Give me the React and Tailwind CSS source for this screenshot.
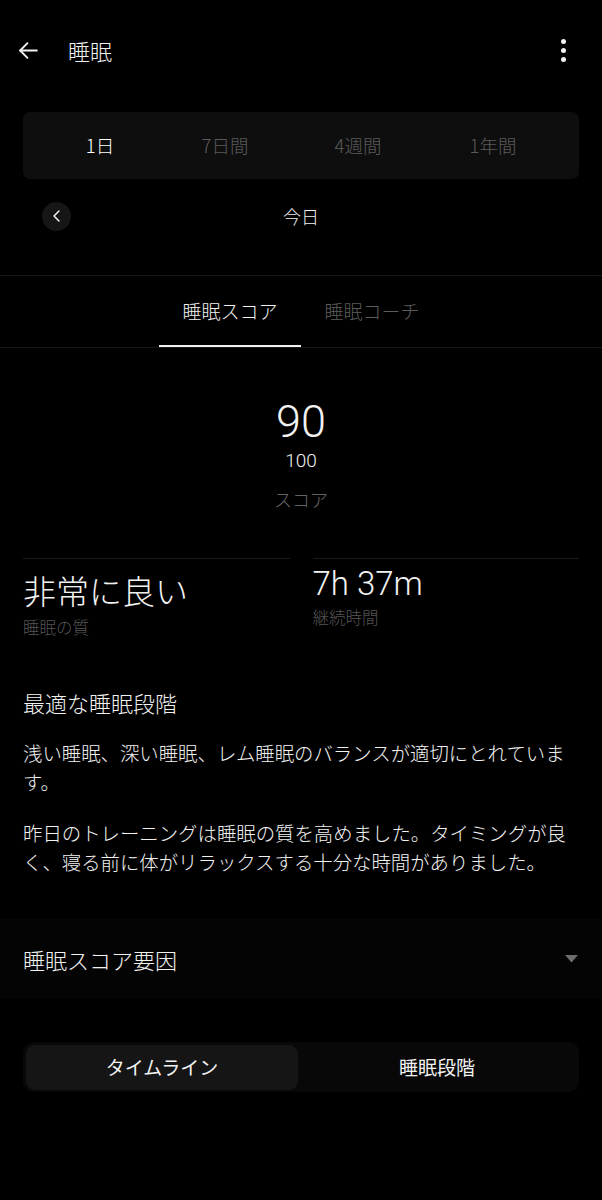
import React from "react";

const font = { fontFamily: '"Noto Sans CJK JP", "Noto Sans", Roboto, sans-serif' };
const roboto = { fontFamily: 'Roboto, "Noto Sans", sans-serif' };

export default function App() {
  return (
    <div className="w-[602px] min-h-[1200px] bg-black text-[#f2f2f2] font-light" style={font}>
      {/* header */}
      <div className="h-[100px] flex items-center pl-[16px] pr-[36px]">
        <svg width="25" height="25" viewBox="0 0 24 24" fill="none" stroke="#f2f2f2" strokeWidth="1.8" strokeLinecap="round" strokeLinejoin="round">
          <path d="M20 12H4" />
          <path d="M11 5l-7 7 7 7" />
        </svg>
        <div className="ml-[27px] text-[22px] leading-none">睡眠</div>
        <div className="ml-auto flex flex-col gap-[4px] items-center">
          <span className="w-[5px] h-[5px] rounded-full bg-[#f2f2f2]" />
          <span className="w-[5px] h-[5px] rounded-full bg-[#f2f2f2]" />
          <span className="w-[5px] h-[5px] rounded-full bg-[#f2f2f2]" />
        </div>
      </div>

      {/* period segmented */}
      <div className="mt-[12px] mx-[23px] h-[67px] rounded-[7px] bg-[#0e0e0e] flex items-center text-[18.5px] pl-[29px]">
        <div className="w-[96px] text-center text-white">1日</div>
        <div className="ml-[29px] w-[96px] text-center text-[#5a5a5a]">7日間</div>
        <div className="ml-[37px] w-[96px] text-center text-[#5a5a5a]">4週間</div>
        <div className="ml-[39px] w-[96px] text-center text-[#5a5a5a]">1年間</div>
      </div>

      {/* date row */}
      <div className="h-[74px] flex items-center px-[42px]">
        <div className="w-[29px] h-[29px] rounded-full bg-[#161616] flex items-center justify-center">
          <svg width="14" height="14" viewBox="0 0 14 14" fill="none" stroke="#f2f2f2" strokeWidth="1.5" strokeLinecap="round" strokeLinejoin="round">
            <path d="M9 2L4 7l5 5" />
          </svg>
        </div>
        <div className="flex-1 text-center text-[18px] pr-[29px]">今日</div>
      </div>

      {/* tabs */}
      <div className="mt-[22px] border-t border-b border-[#181818] h-[73px] flex justify-center">
        <div className="w-[142px] h-full flex items-center justify-center border-b-2 border-[#f2f2f2] text-[19px] text-[#f2f2f2] pt-[1px]">
          睡眠スコア
        </div>
        <div className="w-[142px] h-full flex items-center justify-center text-[19px] text-[#5c5c5c] pb-[1px]">
          睡眠コーチ
        </div>
      </div>

      {/* score */}
      <div className="flex flex-col items-center pt-[52px]">
        <div className="text-[45px] leading-[44px] font-light" style={roboto}>90</div>
        <div className="mt-[5px] text-[19px] leading-[24px] font-light" style={roboto}>100</div>
        <div className="mt-[13px] text-[18px] leading-[26px] text-[#646464]">スコア</div>
      </div>

      {/* stats */}
      <div className="mt-[46px] mx-[23px] grid grid-cols-2 gap-[23px]">
        <div className="border-t border-[#1a1a1a] pt-[11px]">
          <div className="text-[33px] leading-[40px]">非常に良い</div>
          <div className="mt-[6px] text-[16.5px] leading-[22px] text-[#555555]">睡眠の質</div>
        </div>
        <div className="border-t border-[#1a1a1a] pt-[7px]">
          <div className="text-[33px] leading-[36px] font-light" style={roboto}>7h 37m</div>
          <div className="mt-[4px] text-[16.5px] leading-[22px] text-[#555555]">継続時間</div>
        </div>
      </div>

      {/* description */}
      <div className="mx-[23px] mt-[49px]">
        <div className="text-[22px] leading-[30px]">最適な睡眠段階</div>
        <p className="mt-[21px] text-[19.4px] leading-[29px]">
          浅い睡眠、深い睡眠、レム睡眠のバランスが適切にとれています。
        </p>
        <p className="mt-[22px] text-[19.4px] leading-[29px]">
          昨日のトレーニングは睡眠の質を高めました。タイミングが良く、寝る前に体がリラックスする十分な時間がありました。
        </p>
      </div>

      {/* factors */}
      <div className="mt-[43px] h-[80px] bg-[#040404] flex items-center pl-[23px] pr-[24px]">
        <div className="text-[22px] leading-[30px]">睡眠スコア要因</div>
        <svg className="ml-auto" width="13" height="8" viewBox="0 0 13 8">
          <path d="M0 0h13L6.5 7.5z" fill="#6e6e6e" />
        </svg>
      </div>

      {/* bottom segmented */}
      <div className="mt-[43px] mx-[23px] h-[50px] rounded-[10px] bg-[#080808] flex items-center p-[3px] text-[19px] font-normal">
        <div className="w-[272px] h-[45px] rounded-[9px] bg-[#151515] flex items-center justify-center">タイムライン</div>
        <div className="flex-1 h-[45px] flex items-center justify-center">睡眠段階</div>
      </div>
    </div>
  );
}
